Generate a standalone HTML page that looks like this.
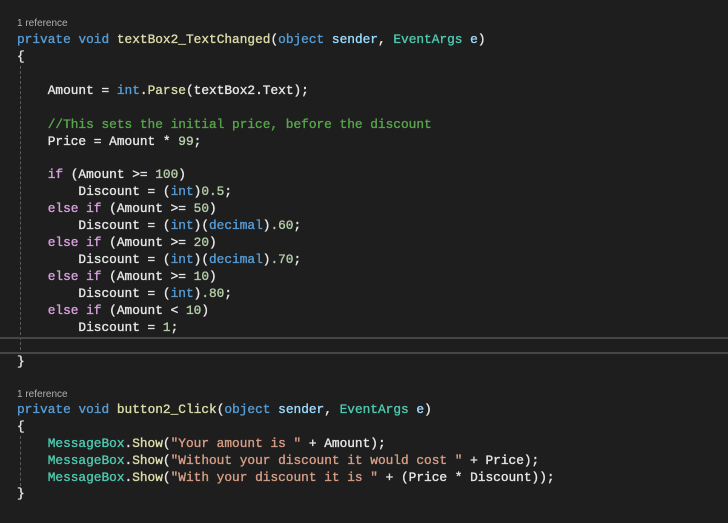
<!DOCTYPE html>
<html><head><style>
html,body{margin:0;padding:0;background:#1e1e1e;width:728px;height:523px;overflow:hidden;position:relative}
.l{position:absolute;left:17px;white-space:pre;font-family:"Liberation Mono",monospace;font-size:12.8px;line-height:17px;color:#e6e6e6;font-weight:normal;letter-spacing:0;-webkit-text-stroke:0.35px currentColor}
.r{position:absolute;left:17px;font-family:"Liberation Sans",sans-serif;font-size:10px;color:#b0b0b0;line-height:12px}
.k{color:#569cd6}.c{color:#d8a0df}.m{color:#dcdcaa}.t{color:#4ec9b0}.s{color:#d69d85}.n{color:#b5cea8}.g{color:#57a64a}.p{color:#9cdcfe}
.guide{position:absolute;left:20px;width:0;border-left:1px dashed #5a5a5a}
.hl{position:absolute;left:0;width:728px;height:2px;background:#464646}
</style></head><body>
<div class="r" style="top:18px">1 reference</div>
<div class="l" style="top:31px"><span class="k">private</span> <span class="k">void</span> <span class="m">textBox2_TextChanged</span>(<span class="k">object</span> <span class="p">sender</span>, <span class="t">EventArgs</span> <span class="p">e</span>)</div>
<div class="l" style="top:48px">{</div>
<div class="guide" style="top:66px;height:284px"></div>
<div class="l" style="top:82px">    Amount = <span class="k">int</span>.<span class="m">Parse</span>(textBox2.Text);</div>
<div class="l" style="top:116px">    <span class="g">//This sets the initial price, before the discount</span></div>
<div class="l" style="top:133px">    Price = Amount * <span class="n">99</span>;</div>
<div class="l" style="top:166px">    <span class="c">if</span> (Amount &gt;= <span class="n">100</span>)</div>
<div class="l" style="top:183px">        Discount = (<span class="k">int</span>)<span class="n">0.5</span>;</div>
<div class="l" style="top:200px">    <span class="c">else</span> <span class="c">if</span> (Amount &gt;= <span class="n">50</span>)</div>
<div class="l" style="top:217px">        Discount = (<span class="k">int</span>)(<span class="k">decimal</span>)<span class="n">.60</span>;</div>
<div class="l" style="top:234px">    <span class="c">else</span> <span class="c">if</span> (Amount &gt;= <span class="n">20</span>)</div>
<div class="l" style="top:251px">        Discount = (<span class="k">int</span>)(<span class="k">decimal</span>)<span class="n">.70</span>;</div>
<div class="l" style="top:268px">    <span class="c">else</span> <span class="c">if</span> (Amount &gt;= <span class="n">10</span>)</div>
<div class="l" style="top:285px">        Discount = (<span class="k">int</span>)<span class="n">.80</span>;</div>
<div class="l" style="top:302px">    <span class="c">else</span> <span class="c">if</span> (Amount &lt; <span class="n">10</span>)</div>
<div class="l" style="top:319px">        Discount = <span class="n">1</span>;</div>
<div class="hl" style="top:337px"></div>
<div class="hl" style="top:352px"></div>
<div class="l" style="top:353px">}</div>
<div class="r" style="top:389px">1 reference</div>
<div class="l" style="top:401px"><span class="k">private</span> <span class="k">void</span> <span class="m">button2_Click</span>(<span class="k">object</span> <span class="p">sender</span>, <span class="t">EventArgs</span> <span class="p">e</span>)</div>
<div class="l" style="top:418px">{</div>
<div class="guide" style="top:436px;height:50px"></div>
<div class="l" style="top:435px">    <span class="t">MessageBox</span>.<span class="m">Show</span>(<span class="s">"Your amount is "</span> + Amount);</div>
<div class="l" style="top:452px">    <span class="t">MessageBox</span>.<span class="m">Show</span>(<span class="s">"Without your discount it would cost "</span> + Price);</div>
<div class="l" style="top:469px">    <span class="t">MessageBox</span>.<span class="m">Show</span>(<span class="s">"With your discount it is "</span> + (Price * Discount));</div>
<div class="l" style="top:485px">}</div>
</body></html>
